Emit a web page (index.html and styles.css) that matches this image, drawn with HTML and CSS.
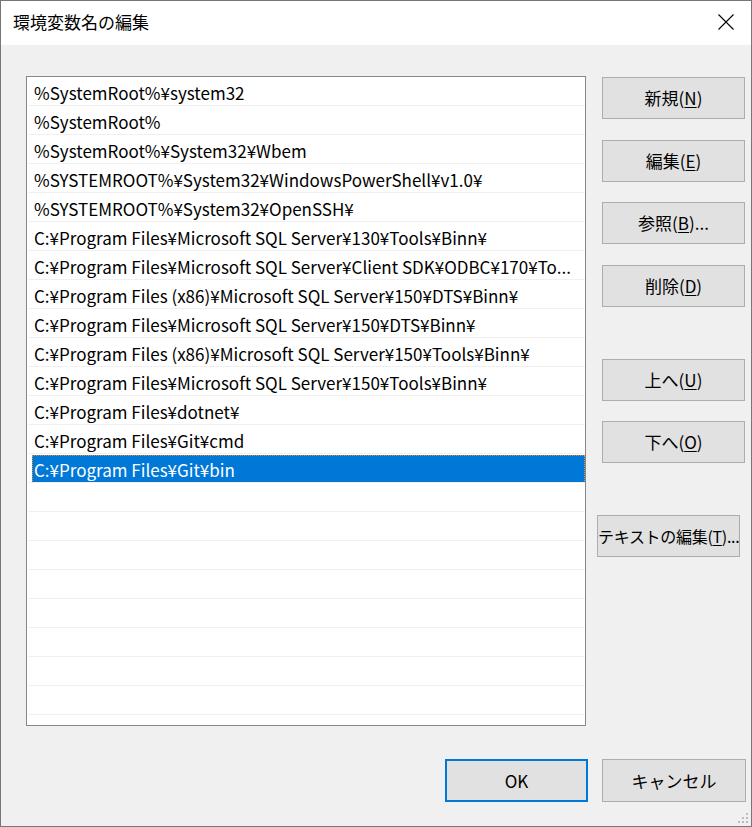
FILE: index.html
```html
<!DOCTYPE html>
<html lang="ja">
<head>
<meta charset="utf-8">
<title>環境変数名の編集</title>
<link rel="stylesheet" href="styles.css">
</head>
<body>
<div class="window">
  <div class="titlebar">
    <span class="title">環境変数名の編集</span>
    <svg class="close" width="16" height="16" viewBox="0 0 16 16"><path d="M0.5 0.5 L15.5 15.5 M15.5 0.5 L0.5 15.5" stroke="#000" stroke-width="1.1" fill="none"/></svg>
  </div>
  <div class="content">
    <div class="main">
      <div class="list">
        <div class="row">%SystemRoot%¥system32</div>
        <div class="row">%SystemRoot%</div>
        <div class="row">%SystemRoot%¥System32¥Wbem</div>
        <div class="row">%SYSTEMROOT%¥System32¥WindowsPowerShell¥v1.0¥</div>
        <div class="row">%SYSTEMROOT%¥System32¥OpenSSH¥</div>
        <div class="row">C:¥Program Files¥Microsoft SQL Server¥130¥Tools¥Binn¥</div>
        <div class="row">C:¥Program Files¥Microsoft SQL Server¥Client SDK¥ODBC¥170¥To...</div>
        <div class="row">C:¥Program Files (x86)¥Microsoft SQL Server¥150¥DTS¥Binn¥</div>
        <div class="row">C:¥Program Files¥Microsoft SQL Server¥150¥DTS¥Binn¥</div>
        <div class="row">C:¥Program Files (x86)¥Microsoft SQL Server¥150¥Tools¥Binn¥</div>
        <div class="row">C:¥Program Files¥Microsoft SQL Server¥150¥Tools¥Binn¥</div>
        <div class="row">C:¥Program Files¥dotnet¥</div>
        <div class="row">C:¥Program Files¥Git¥cmd</div>
        <div class="row selected"><span class="sel">C:¥Program Files¥Git¥bin</span></div>
        <div class="row empty"></div>
        <div class="row empty"></div>
        <div class="row empty"></div>
        <div class="row empty"></div>
        <div class="row empty"></div>
        <div class="row empty"></div>
        <div class="row empty"></div>
        <div class="row empty"></div>
      </div>
      <div class="side">
        <button class="btn b-new">新規(<u>N</u>)</button>
        <button class="btn b-edit">編集(<u>E</u>)</button>
        <button class="btn b-browse">参照(<u>B</u>)...</button>
        <button class="btn b-del">削除(<u>D</u>)</button>
        <button class="btn b-up">上へ(<u>U</u>)</button>
        <button class="btn b-down">下へ(<u>O</u>)</button>
        <button class="btn b-text">テキストの編集(<u>T</u>)...</button>
      </div>
    </div>
    <div class="footer">
      <button class="btn ok">OK</button>
      <button class="btn cancel">キャンセル</button>
    </div>
    <svg class="grip" width="12" height="12" viewBox="0 0 12 12">
      <rect x="9" y="1" width="2" height="2" fill="#bcbcbc"/>
      <rect x="5" y="5" width="2" height="2" fill="#bcbcbc"/>
      <rect x="9" y="5" width="2" height="2" fill="#bcbcbc"/>
      <rect x="1" y="9" width="2" height="2" fill="#bcbcbc"/>
      <rect x="5" y="9" width="2" height="2" fill="#bcbcbc"/>
      <rect x="9" y="9" width="2" height="2" fill="#bcbcbc"/>
    </svg>
  </div>
</div>
</body>
</html>
```

FILE: styles.css
```css
* { box-sizing: border-box; }
html, body { margin: 0; padding: 0; background: #f0f0f0; }
body {
  font-family: "Noto Sans CJK JP", "Noto Sans", sans-serif;
  font-size: 17px;
  color: #000;
}
.window {
  width: 752px;
  height: 827px;
  border: 1px solid #767676;
  background: #f0f0f0;
  display: flex;
  flex-direction: column;
  position: relative;
}
.titlebar {
  height: 44px;
  background: #fff;
  display: flex;
  align-items: center;
  justify-content: space-between;
  padding: 0 17px 0 12px;
  flex-shrink: 0;
}
.title {
  font-size: 17px;
  line-height: 20px;
  margin-top: -2px;
}
.close { display: block; margin-top: -2px; }
.content {
  flex: 1;
  position: relative;
  display: flex;
  flex-direction: column;
}
.main {
  display: flex;
  padding: 31px 6px 0 25px;
  gap: 16px;
}
.list {
  width: 560px;
  height: 650px;
  border: 1px solid #828790;
  background: #fff;
  padding: 0 0 0 1px;
  overflow: hidden;
}
.row {
  height: 29px;
  border-bottom: 1px solid #f0f0f0;
  padding: 4px 0 0 6px;
  line-height: 24px;
  white-space: nowrap;
  overflow: hidden;
}
.row.selected {
  padding: 1px 0 0 4px;
}
.sel {
  display: block;
  height: 28px;
  background: #0078d7;
  color: #fff;
  padding: 3px 0 0 2px;
  line-height: 24px;
  outline: 1px dotted #f08c28;
  outline-offset: -1px;
}
.side {
  display: flex;
  flex-direction: column;
  padding-top: 1px;
  width: 143px;
}
.btn {
  font-family: inherit;
  font-size: 17px;
  color: #000;
  width: 143px;
  height: 42px;
  background: #e1e1e1;
  border: 1px solid #adadad;
  padding: 0;
  margin: 0;
  line-height: 20px;
  white-space: nowrap;
}
.btn u { text-underline-offset: 2px; }
.b-edit { margin-top: 21px; }
.b-browse { margin-top: 20px; }
.b-del { margin-top: 21px; }
.b-up { margin-top: 52px; }
.b-down { margin-top: 20px; }
.b-text {
  margin-top: 52px;
  margin-left: -5px;
  font-size: 16px;
  letter-spacing: -0.3px;
}
.footer {
  display: flex;
  justify-content: flex-end;
  gap: 14px;
  padding: 33px 5px 0 0;
}
.footer .btn { height: 43px; }
.footer .cancel { width: 144px; }
.btn.ok { border: 2px solid #0078d7; }
.grip {
  position: absolute;
  right: 2px;
  bottom: 2px;
}
```
